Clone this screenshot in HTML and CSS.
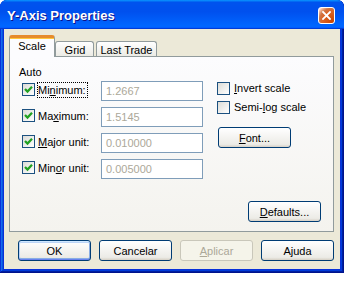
FILE: index.html
```html
<!DOCTYPE html>
<html>
<head>
<meta charset="utf-8">
<link rel="stylesheet" href="styles.css">
</head>
<body>
<div class="window">
  <div class="titlebar">
    <span class="title">Y-Axis Properties</span>
    <span class="close"><svg width="9" height="9" viewBox="0 0 9 9"><path d="M1 1 L8 8 M8 1 L1 8" stroke="#fff" stroke-width="1.8" stroke-linecap="square"/></svg></span>
  </div>
  <div class="client">
    <div class="tabs">
      <div class="tab active">Scale</div>
      <div class="tab grid">Grid</div>
      <div class="tab last">Last Trade</div>
    </div>
    <div class="panel">
      <div class="panel-body">
        <div class="col-left">
          <div class="group-label">Auto</div>
          <div class="rows">
            <div class="row">
              <span class="cb"><svg width="11" height="11" viewBox="0 0 11 11"><path d="M2 5 L4.5 7.5 L9 2.8" fill="none" stroke="#21a121" stroke-width="2.3"/></svg></span>
              <span class="lbl"><span class="lbl-text focus">Mi<u>n</u>imum:</span></span>
              <span class="field">1.2667</span>
            </div>
            <div class="row">
              <span class="cb"><svg width="11" height="11" viewBox="0 0 11 11"><path d="M2 5 L4.5 7.5 L9 2.8" fill="none" stroke="#21a121" stroke-width="2.3"/></svg></span>
              <span class="lbl"><span class="lbl-text">Ma<u>x</u>imum:</span></span>
              <span class="field">1.5145</span>
            </div>
            <div class="row">
              <span class="cb"><svg width="11" height="11" viewBox="0 0 11 11"><path d="M2 5 L4.5 7.5 L9 2.8" fill="none" stroke="#21a121" stroke-width="2.3"/></svg></span>
              <span class="lbl"><span class="lbl-text"><u>M</u>ajor unit:</span></span>
              <span class="field">0.010000</span>
            </div>
            <div class="row">
              <span class="cb"><svg width="11" height="11" viewBox="0 0 11 11"><path d="M2 5 L4.5 7.5 L9 2.8" fill="none" stroke="#21a121" stroke-width="2.3"/></svg></span>
              <span class="lbl"><span class="lbl-text">Min<u>o</u>r unit:</span></span>
              <span class="field">0.005000</span>
            </div>
          </div>
        </div>
        <div class="col-right">
          <div class="check-row"><span class="cb"></span><span class="check-lbl"><u>I</u>nvert scale</span></div>
          <div class="check-row"><span class="cb"></span><span class="check-lbl">Semi-<u>l</u>og scale</span></div>
          <span class="btn font-btn"><u>F</u>ont...</span>
        </div>
      </div>
      <div class="panel-foot">
        <span class="btn"><u>D</u>efaults...</span>
      </div>
    </div>
    <div class="buttons">
      <span class="btn default">OK</span>
      <span class="btn">Cancelar</span>
      <span class="btn disabled"><u>A</u>plicar</span>
      <span class="btn">Ajuda</span>
    </div>
  </div>
</div>
</body>
</html>
```

FILE: styles.css
```css
* { box-sizing: border-box; }
html, body { margin: 0; padding: 0; background: #fff; }
body {
  width: 344px;
  height: 290px;
  overflow: hidden;
  font-family: "Liberation Sans", Arial, sans-serif;
  font-size: 11px;
  color: #000;
}
u { text-decoration: underline; text-underline-offset: 1px; }

.window {
  width: 344px;
  height: 273px;
  padding: 0 4px 4px 4px;
  border-radius: 7px 7px 0 0;
  background: #0831d9;
  box-shadow: inset -1px -1px #00138c, inset 1px 1px #0831d9, inset -2px -2px #001ea0, inset 2px 2px #166aee, inset -3px -3px #003bda, inset 3px 3px #0855dd;
  display: flex;
  flex-direction: column;
}

.titlebar {
  height: 29px;
  margin: 0 -4px;
  padding: 0 9px 0 7px;
  border-radius: 7px 7px 0 0;
  background: linear-gradient(180deg, #0997ff, #0053ee 8%, #0050ee 40%, #0066ff 88%, #0066ff 93%, #005bff 95%, #003dd7 96%, #003dd7);
  display: flex;
  align-items: center;
}
.title {
  color: #fff;
  font-weight: bold;
  font-size: 13px;
  text-shadow: 1px 1px #0f1089;
  margin-top: 1px;
}
.close {
  margin-left: auto;
  width: 17px;
  height: 17px;
  border: 1px solid #fff;
  border-radius: 3px;
  background: radial-gradient(circle at 90% 90%, #cc4600 0%, #dc6527 55%, #cd7546 70%, #ffccb2 90%, #fff 100%);
  display: flex;
  align-items: center;
  justify-content: center;
  margin-top: 1px;
}
.close svg { display: block; }

.client {
  flex: 1;
  background: #ece9d8;
  padding: 6px 6px 8px 5px;
  display: flex;
  flex-direction: column;
}

.tabs {
  display: flex;
  align-items: flex-end;
  height: 21px;
  position: relative;
  z-index: 1;
}
.tab {
  height: 15px;
  border: 1px solid #919b9c;
  border-bottom: none;
  border-radius: 3px 3px 0 0;
  background: linear-gradient(#fff, #f3f3ef 60%, #ecebe5);
  display: flex;
  align-items: center;
  justify-content: center;
  padding-top: 1px;
}
.tab.active {
  height: 22px;
  width: 46px;
  margin-bottom: -1px;
  border-top: 3px solid #e68b2c;
  box-shadow: inset 0 1px #ffc73c;
  background: #fcfcfe;
  padding-top: 0;
  padding-bottom: 3px;
}
.tab.grid { width: 39px; padding-left: 1px; }
.tab.last { width: 61px; margin-left: 2px; }

.panel {
  height: 176px;
  border: 1px solid #919b9c;
  background: linear-gradient(180deg, #fcfcfe, #f4f3ee);
  padding: 9px 12px 9px 9px;
  display: flex;
  flex-direction: column;
}
.panel-body {
  display: flex;
  align-items: flex-start;
}
.col-left { display: flex; flex-direction: column; }
.group-label { height: 13px; line-height: 13px; }
.rows {
  margin-top: 2px;
  margin-left: 3px;
  display: flex;
  flex-direction: column;
  gap: 6px;
}
.row {
  height: 20px;
  display: flex;
  align-items: center;
}
.cb {
  width: 13px;
  height: 13px;
  flex: none;
  border: 1px solid #1c5180;
  background: linear-gradient(135deg, #dcdcd7, #fff);
  display: flex;
  align-items: center;
  justify-content: center;
}
.cb svg { display: block; }
.row .cb { margin-top: -3px; }
.lbl {
  width: 66px;
  padding-left: 2px;
  margin-top: -3px;
}
.lbl-text {
  display: inline-block;
  line-height: 14px;
  border: 1px dotted transparent;
  padding: 0 1px 0 0;
}
.lbl-text.focus { border-color: #000; }
.field {
  width: 102px;
  height: 20px;
  border: 1px solid #7f9db9;
  background: #fff;
  color: #aca899;
  padding-left: 4px;
  line-height: 18px;
}

.col-right {
  margin-left: 14px;
  padding-top: 16px;
  display: flex;
  flex-direction: column;
  align-items: flex-start;
}
.check-row {
  display: flex;
  align-items: center;
  height: 13px;
  margin-bottom: 6px;
}
.check-lbl { margin-left: 4px; line-height: 13px; }
.font-btn { margin-top: 7px; margin-left: 1px; }

.panel-foot {
  margin-top: auto;
  display: flex;
  justify-content: flex-end;
}

.btn {
  width: 73px;
  height: 21px;
  border: 1px solid #003c74;
  border-radius: 3px;
  background: linear-gradient(180deg, #fff, #ecebe6 86%, #d6d0c5);
  display: flex;
  align-items: center;
  justify-content: center;
  flex: none;
}
.btn.default {
  box-shadow: inset 0 1px #cee7ff, inset 0 -1px #6982ee, inset 1px 0 #bcd4f6, inset -1px 0 #89ade4, inset 0 2px #bcd4f6, inset 0 -2px #89ade4;
}
.btn.disabled {
  border-color: #c9c7ba;
  background: #f5f4ea;
  color: #aca899;
}

.buttons {
  margin-top: 8px;
  display: flex;
  justify-content: flex-end;
  gap: 8px;
}
```
